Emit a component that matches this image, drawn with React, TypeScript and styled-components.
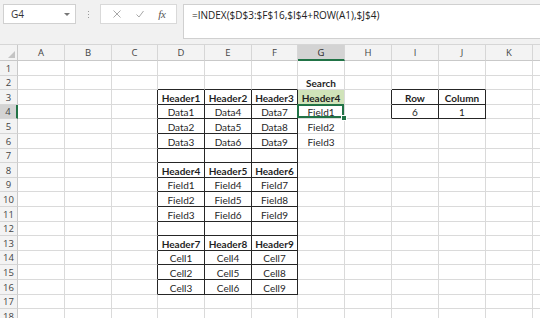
import React from 'react';
import styled, { createGlobalStyle, css } from 'styled-components';

const GlobalStyle = createGlobalStyle`
  html, body { margin: 0; padding: 0; background: #ffffff; overflow: hidden; }
  body { font-family: "Lato", "Open Sans", sans-serif; }
`;

const GREEN = '#217346';
const GRID = '#dadada';
const INK = '#1f1f1f';

const COLS = ['A', 'B', 'C', 'D', 'E', 'F', 'G', 'H', 'I', 'J', 'K', 'L'];
const COL_WIDTHS = [47, 47, 46, 47, 47, 46, 47, 47, 47, 47, 47, 20];
const ROW_HEIGHTS = [15, 14, 15, 14, 15, 15, 14, 15, 14, 15, 15, 14, 15, 14, 15, 15, 14, 15];

type CellData = { text: string; bold?: boolean; fill?: string };

const DATA: Record<string, CellData> = {};
const put = (ref: string, text: string, bold = false, fill?: string) => {
  DATA[ref] = { text, bold, fill };
};
put('G2', 'Search', true);
put('D3', 'Header1', true); put('E3', 'Header2', true); put('F3', 'Header3', true);
put('G3', 'Header4', true, '#d0e3b9');
put('D4', 'Data1'); put('E4', 'Data4'); put('F4', 'Data7'); put('G4', 'Field1');
put('D5', 'Data2'); put('E5', 'Data5'); put('F5', 'Data8'); put('G5', 'Field2');
put('D6', 'Data3'); put('E6', 'Data6'); put('F6', 'Data9'); put('G6', 'Field3');
put('D8', 'Header4', true); put('E8', 'Header5', true); put('F8', 'Header6', true);
put('D9', 'Field1'); put('E9', 'Field4'); put('F9', 'Field7');
put('D10', 'Field2'); put('E10', 'Field5'); put('F10', 'Field8');
put('D11', 'Field3'); put('E11', 'Field6'); put('F11', 'Field9');
put('D13', 'Header7', true); put('E13', 'Header8', true); put('F13', 'Header9', true);
put('D14', 'Cell1'); put('E14', 'Cell4'); put('F14', 'Cell7');
put('D15', 'Cell2'); put('E15', 'Cell5'); put('F15', 'Cell8');
put('D16', 'Cell3'); put('E16', 'Cell6'); put('F16', 'Cell9');
put('I3', 'Row', true); put('J3', 'Column', true);
put('I4', '6'); put('J4', '1');

// bordered ranges: [c1, r1, c2, r2] (0-based col, 1-based row)
const RANGES: [number, number, number, number][] = [
  [3, 3, 5, 16],
  [8, 3, 9, 4],
];
const bordered = (c: number, r: number) =>
  RANGES.some(([c1, r1, c2, r2]) => c >= c1 && c <= c2 && r >= r1 && r <= r2);

const SEL_COL = 6;
const SEL_ROW = 4;

/* ---------- toolbar ---------- */

const Toolbar = styled.div`
  display: flex;
  align-items: flex-start;
  height: 45px;
  box-sizing: border-box;
  padding: 4px 0 0 3px;
  background: #f1f1f1;
  border-bottom: 1px solid #d6d6d6;
`;

const NameBox = styled.div`
  display: flex;
  align-items: center;
  justify-content: space-between;
  width: 73px;
  height: 20px;
  box-sizing: border-box;
  padding: 0 5px 0 7px;
  background: #ffffff;
  border: 1px solid #d0d0d0;
  font-family: "Open Sans", sans-serif;
  font-size: 10px;
  color: #333333;
`;

const Caret = styled.span`
  width: 0;
  height: 0;
  border-left: 3px solid transparent;
  border-right: 3px solid transparent;
  border-top: 3px solid #777777;
`;

const Grip = styled.div`
  display: flex;
  flex-direction: column;
  align-items: center;
  justify-content: center;
  gap: 2px;
  width: 24px;
  height: 20px;
`;

const GripDot = styled.span`
  width: 1px;
  height: 1px;
  background: #9a9a9a;
`;

const FuncBox = styled.div`
  display: flex;
  align-items: center;
  justify-content: space-around;
  width: 77px;
  height: 20px;
  box-sizing: border-box;
  padding: 0 4px;
  background: #ffffff;
  border: 1px solid #d9d9d9;
`;

const FxText = styled.span`
  font-family: "Liberation Serif", "DejaVu Serif", serif;
  font-style: italic;
  font-size: 11px;
  color: #555555;
  letter-spacing: -0.5px;
`;

const FormulaBox = styled.div`
  flex: 1;
  height: 35px;
  margin-left: 6px;
  box-sizing: border-box;
  padding: 3px 0 0 8px;
  background: #ffffff;
  border: 1px solid #d0d0d0;
  border-right: none;
  font-family: "Open Sans", sans-serif;
  font-size: 10px;
  color: #222222;
  white-space: nowrap;
  overflow: hidden;
`;

/* ---------- sheet ---------- */

const Sheet = styled.div`
  display: grid;
  grid-template-columns: 18px ${COL_WIDTHS.map((w) => `${w}px`).join(' ')};
  grid-template-rows: 16px ${ROW_HEIGHTS.map((h) => `${h}px`).join(' ')};
  overflow: hidden;
  height: 273px;
`;

const Corner = styled.div`
  position: relative;
  background: #f3f3f3;
  border-right: 1px solid #c9c9c9;
  border-bottom: 1px solid #c9c9c9;
  box-sizing: border-box;

  &::after {
    content: '';
    position: absolute;
    right: 2px;
    bottom: 2px;
    width: 0;
    height: 0;
    border-left: 7px solid transparent;
    border-bottom: 7px solid #c4c4c4;
  }
`;

const ColHead = styled.div<{ $sel?: boolean }>`
  display: flex;
  align-items: center;
  justify-content: center;
  box-sizing: border-box;
  background: ${(p) => (p.$sel ? '#d3d3d3' : '#f3f3f3')};
  border-right: 1px solid #d6d6d6;
  border-bottom: ${(p) => (p.$sel ? `2px solid ${GREEN}` : '1px solid #c9c9c9')};
  font-family: "Open Sans", sans-serif;
  font-size: 9.5px;
  color: ${(p) => (p.$sel ? '#2a2a2a' : '#444444')};
  padding-top: ${(p) => (p.$sel ? '1px' : '0')};
`;

const RowHead = styled.div<{ $sel?: boolean }>`
  display: flex;
  align-items: center;
  justify-content: center;
  box-sizing: border-box;
  background: ${(p) => (p.$sel ? '#d3d3d3' : '#f3f3f3')};
  border-right: ${(p) => (p.$sel ? `2px solid ${GREEN}` : '1px solid #c9c9c9')};
  border-bottom: 1px solid #d6d6d6;
  font-family: "Open Sans", sans-serif;
  font-size: 9.5px;
  color: #444444;
`;

const Cell = styled.div<{ $right: boolean; $bottom: boolean; $bold?: boolean; $fill?: string; $sel?: boolean }>`
  position: relative;
  display: flex;
  align-items: center;
  justify-content: center;
  box-sizing: border-box;
  padding-top: 1px;
  background: ${(p) => p.$fill || '#ffffff'};
  border-right: 1px solid ${(p) => (p.$right ? '#262626' : GRID)};
  border-bottom: 1px solid ${(p) => (p.$bottom ? '#262626' : GRID)};
  font-family: "Lato", "Open Sans", sans-serif;
  font-size: 10px;
  font-weight: ${(p) => (p.$bold ? 700 : 400)};
  color: ${INK};
  white-space: nowrap;
  ${(p) =>
    p.$sel &&
    css`
      z-index: 2;
      &::before {
        content: '';
        position: absolute;
        left: -1px;
        top: -1px;
        right: 0;
        bottom: 0;
        border: 2px solid ${GREEN};
      }
      &::after {
        content: '';
        position: absolute;
        right: -3px;
        bottom: -3px;
        width: 4px;
        height: 4px;
        background: ${GREEN};
        border: 1px solid #ffffff;
      }
    `}
`;

const CrossIcon = () => (
  <svg width="10" height="10" viewBox="0 0 10 10">
    <path d="M1.5 1.5 L8.5 8.5 M8.5 1.5 L1.5 8.5" stroke="#a8a8a8" strokeWidth="1" fill="none" />
  </svg>
);

const CheckIcon = () => (
  <svg width="10" height="10" viewBox="0 0 10 10">
    <path d="M1.5 5.5 L4 8 L8.5 2" stroke="#a8a8a8" strokeWidth="1" fill="none" />
  </svg>
);

export default function App() {
  const cells: React.ReactNode[] = [];
  cells.push(<Corner key="corner" />);
  COLS.forEach((c, i) => {
    cells.push(
      <ColHead key={`h${c}`} $sel={i === SEL_COL}>
        {i < 11 ? c : ''}
      </ColHead>
    );
  });
  ROW_HEIGHTS.forEach((_, ri) => {
    const r = ri + 1;
    cells.push(
      <RowHead key={`r${r}`} $sel={r === SEL_ROW}>
        {r}
      </RowHead>
    );
    COLS.forEach((c, ci) => {
      const d = DATA[`${c}${r}`];
      const b = bordered(ci, r);
      cells.push(
        <Cell
          key={`${c}${r}`}
          $right={b || bordered(ci + 1, r)}
          $bottom={b || bordered(ci, r + 1)}
          $bold={d?.bold}
          $fill={d?.fill}
          $sel={ci === SEL_COL && r === SEL_ROW}
        >
          {d?.text}
        </Cell>
      );
    });
  });

  return (
    <>
      <GlobalStyle />
      <Toolbar>
        <NameBox>
          <span>G4</span>
          <Caret />
        </NameBox>
        <Grip>
          <GripDot />
          <GripDot />
          <GripDot />
        </Grip>
        <FuncBox>
          <CrossIcon />
          <CheckIcon />
          <FxText>fx</FxText>
        </FuncBox>
        <FormulaBox>=INDEX($D$3:$F$16,$I$4+ROW(A1),$J$4)</FormulaBox>
      </Toolbar>
      <Sheet>{cells}</Sheet>
    </>
  );
}
